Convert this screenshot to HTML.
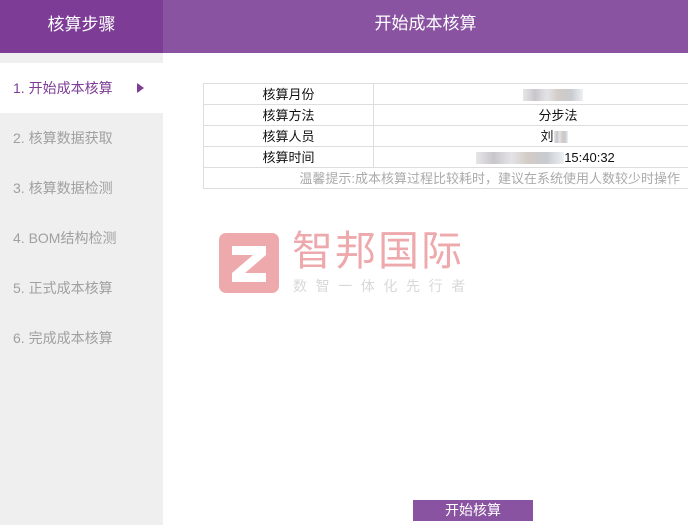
<!DOCTYPE html>
<html><head><meta charset="utf-8"><style>
*{margin:0;padding:0;box-sizing:border-box}
body{width:688px;height:525px;position:relative;background:#fff;font-family:"Liberation Sans","Noto Sans CJK SC",sans-serif;overflow:hidden}
.side{position:absolute;left:0;top:0;width:163px;height:525px;background:#efefef}
.sh{height:53px;background:#7d3c96;color:#fff;font-size:17px;text-align:center;line-height:50px}
.mh{position:absolute;left:163px;top:0;width:525px;height:53px;background:#8a53a1;color:#fff;font-size:17px;text-align:center;line-height:48px}
.item{position:absolute;left:0;width:163px;height:50px;padding-left:13px;line-height:50px;font-size:14px;color:#a0a0a0}
.act{background:#fff;color:#7d3c96}
.tri{position:absolute;left:137px;top:20px;width:0;height:0;border-left:7px solid #7d3c96;border-top:5px solid transparent;border-bottom:5px solid transparent}
table{position:absolute;left:203px;top:83px;width:490px;border-collapse:collapse;font-size:13px;color:#111}
td{border:1px solid #ddd;height:21px;text-align:center;padding:0;line-height:19px}
td.l{width:170px}
.tip{color:#aaa;text-align:right;padding-right:12px}
.blur{display:inline-block;height:12px;vertical-align:middle;background:linear-gradient(90deg,#e6e6e8,#c9c6ca,#e3e3e6,#d2cbc6,#c7cbd0,#eef0f2)}
.z{position:absolute;left:219px;top:233px;width:60px;height:60px;background:#eea9ad;border-radius:7px}
.logo{position:absolute;left:292px;top:226px;font-size:41px;color:#eea9ad;letter-spacing:2px;line-height:50px;font-weight:normal}
.sub{position:absolute;left:293px;top:277px;font-size:14px;color:#d8d8d8;letter-spacing:8.6px;line-height:18px}
.btn{position:absolute;left:413px;top:500px;width:120px;height:21px;background:#8a53a1;color:#fff;font-size:14px;text-align:center;line-height:21px}
</style></head><body>
<div class="side"><div class="sh">核算步骤</div></div>
<div class="mh">开始成本核算</div>
<div class="item act" style="top:63px">1. 开始成本核算<div class="tri"></div></div>
<div class="item" style="top:113px">2. 核算数据获取</div>
<div class="item" style="top:163px">3. 核算数据检测</div>
<div class="item" style="top:213px">4. BOM结构检测</div>
<div class="item" style="top:263px">5. 正式成本核算</div>
<div class="item" style="top:313px">6. 完成成本核算</div>
<table>
<tr><td class="l">核算月份</td><td><span class="blur" style="width:60px;margin-left:40px"></span></td></tr>
<tr><td class="l">核算方法</td><td style="padding-left:50px">分步法</td></tr>
<tr><td class="l">核算人员</td><td style="padding-left:42px">刘<span class="blur" style="width:14px"></span></td></tr>
<tr><td class="l">核算时间</td><td style="padding-left:25px"><span class="blur" style="width:88px"></span>15:40:32</td></tr>
<tr><td colspan="2" class="tip">温馨提示:成本核算过程比较耗时，建议在系统使用人数较少时操作</td></tr>
</table>
<div class="z"><svg width="60" height="60" viewBox="0 0 60 60"><path d="M13 13H47V22L26 40H47V49H13V40L34 22H13Z" fill="#fff"/></svg></div>
<div class="logo">智邦国际</div>
<div class="sub">数智一体化先行者</div>
<div class="btn">开始核算</div>
</body></html>
